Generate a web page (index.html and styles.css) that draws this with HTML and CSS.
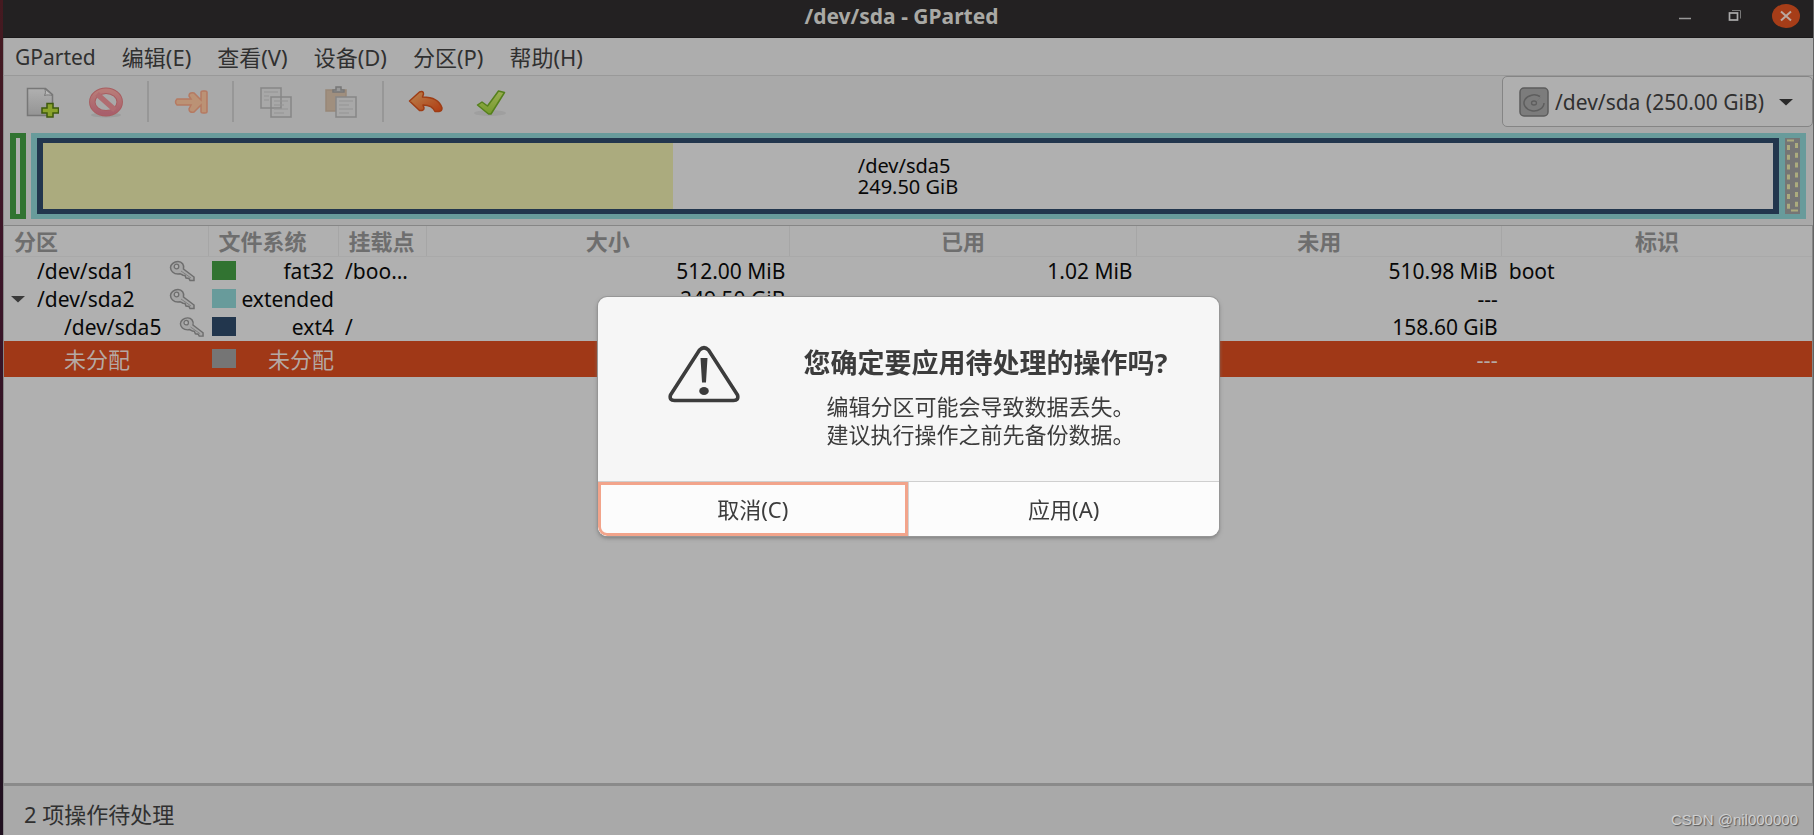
FILE: index.html
```html
<!DOCTYPE html>
<html lang="zh-CN">
<head>
<meta charset="utf-8">
<title>/dev/sda - GParted</title>
<link rel="stylesheet" href="styles.css">
</head>
<body>
<svg class="defs" aria-hidden="true">
  <defs>
    <linearGradient id="g-doc" x1="0" y1="0" x2="0" y2="1"><stop offset="0" stop-color="#b0b0b0"/><stop offset="1" stop-color="#949494"/></linearGradient>
    <linearGradient id="g-no" x1="0" y1="0" x2="0" y2="1"><stop offset="0" stop-color="#b87c78"/><stop offset="1" stop-color="#a85f6c"/></linearGradient>
    <linearGradient id="g-undo" x1="0" y1="0" x2="1" y2="1"><stop offset="0" stop-color="#b98550"/><stop offset="1" stop-color="#b03a10"/></linearGradient>
    <linearGradient id="g-ok" x1="0" y1="0" x2="0" y2="1"><stop offset="0" stop-color="#9cae55"/><stop offset="1" stop-color="#759b2c"/></linearGradient>
    <symbol id="key" viewBox="0 0 26 22">
      <path d="M9 1.500c-4 0-7.500 2.800-7.500 6s3 6.500 7.500 6.500l2-.3 3 1.500 2 .3 1 2.500 3 .5 1 2h4v-3.500L14.500 9c1-4-1.500-7.500-5.500-7.500z" fill="#a6a6a6" stroke="#6e6e6e" stroke-width="1.500"/>
      <circle cx="7.500" cy="6.500" r="2.300" fill="#b0b0b0" stroke="#6e6e6e" stroke-width="1.300"/>
      <path d="M12 11l10 7" stroke="#808080" stroke-width="1"/>
    </symbol>
  </defs>
</svg>
<div class="window">
  <header class="titlebar">
    <h1 class="titlebar-title">/dev/sda - GParted</h1>
    <div class="window-controls">
      <button class="control" aria-label="最小化"><svg width="16" height="16" viewBox="0 0 16 16"><path d="M2 10.500h12" stroke="#999" stroke-width="1.500"/></svg></button>
      <button class="control" aria-label="还原"><svg width="16" height="16" viewBox="0 0 16 16"><path d="M5 2.500h8.500v8" fill="none" stroke="#777" stroke-width="1"/><rect x="2.500" y="5" width="8" height="7" fill="none" stroke="#aaa" stroke-width="1.700"/></svg></button>
      <button class="control control-close" aria-label="关闭"><svg width="16" height="16" viewBox="0 0 16 16"><path d="M3 3.500l10 9M13 3.500l-10 9" stroke="#bba89f" stroke-width="2"/></svg></button>
    </div>
  </header>

  <nav class="menubar">
    <button class="menu">GParted</button>
    <button class="menu">编辑(E)</button>
    <button class="menu">查看(V)</button>
    <button class="menu">设备(D)</button>
    <button class="menu">分区(P)</button>
    <button class="menu">帮助(H)</button>
  </nav>

  <div class="toolbar">
    <div class="tools">
      <button class="tool" aria-label="新建"><svg width="36" height="32" viewBox="-2 0 36 32">
        <path d="M2.500 2.500h18l7 6v21h-25z" fill="url(#g-doc)" stroke="#777" stroke-width="1.500"/>
        <path d="M19.500 2.500c1.500 3 1 5 0 7 3-1 5-.5 8 0z" fill="#b8b8b8" stroke="#777" stroke-width="1"/>
        <path d="M22 17.500h6v4.500h5.500v5H28v4h-6v-4h-5v-5h5z" fill="#8aa32c" stroke="#3e5a0c" stroke-width="1.500"/></svg></button>
      <button class="tool" aria-label="删除"><svg width="36" height="32" viewBox="0 0 36 32">
        <ellipse cx="18" cy="29" rx="15" ry="2.500" fill="#9c9c9c"/>
        <ellipse cx="18" cy="16" rx="13.700" ry="11.200" fill="none" stroke="#a85d60" stroke-width="6.500"/>
        <ellipse cx="18" cy="16" rx="13.700" ry="11.200" fill="none" stroke="url(#g-no)" stroke-width="4.500"/>
        <path d="M9 8l18 16" stroke="#b06c70" stroke-width="5.500"/></svg></button>
      <span class="divider"></span>
      <button class="tool" aria-label="调整大小/移动"><svg width="36" height="32" viewBox="0 0 36 32">
        <path d="M4 13h14l-2-3q0-4 5-3l7 7V6q0-1 2-1h2q2 0 2 1v20q0 1-2 1h-2q-2 0-2-1v-7l-7 7q-5 1-5-3l2-4H4q-3-3 0-6z" fill="#bb9275" stroke="#b57a62" stroke-width="1.500"/></svg></button>
      <span class="divider"></span>
      <button class="tool" aria-label="复制"><svg width="36" height="32" viewBox="0 0 36 32">
        <g fill="#a8a8a8" stroke="#868686" stroke-width="1.500"><path d="M3 2h20v20H3zM13 11h20v20H13z"/><path d="M6 6h14M6 10h5M6 14h5M16 15h14M16 19h10M16 23h14M16 27h10" stroke="#949494" stroke-width="1"/></g></svg></button>
      <button class="tool" aria-label="粘贴"><svg width="36" height="32" viewBox="0 0 36 32">
        <path d="M3 4h20v21H3z" fill="#a08f7e" stroke="#988878" stroke-width="1.500"/>
        <path d="M10 6V4h3V1h5v3h3v2z" fill="#999" stroke="#777" stroke-width="1.500"/>
        <path d="M13 11h20v20H13z" fill="#a8a8a8" stroke="#868686" stroke-width="1.500"/><path d="M16 15h14M16 19h10M16 23h14M16 27h10" stroke="#949494" stroke-width="1"/></svg></button>
      <span class="divider"></span>
      <button class="tool" aria-label="撤消"><svg width="36" height="32" viewBox="0 0 36 32">
        <path d="M1.500 15l10-9q4-1.500 4 2l-1 3c10 0 17 3 19.500 11q0 3-3 3.500h-4c-2-5-6-6.500-12-6.500l1 3q0 3-4.500 2.500z" fill="url(#g-undo)" stroke="#9e3d15" stroke-width="1.500" stroke-linejoin="round"/></svg></button>
      <button class="tool" aria-label="应用"><svg width="36" height="32" viewBox="0 0 36 32">
        <ellipse cx="17" cy="27" rx="16" ry="3" fill="#9f9f9f"/>
        <path d="M4.500 19l4.500-3 5.500 4L25.500 5l6 1.500L18 28h-2.500z" fill="url(#g-ok)" stroke="#55801c" stroke-width="1.500" stroke-linejoin="round"/></svg></button>
    </div>
    <div class="device">
      <svg class="device-icon" width="30" height="30" viewBox="0 0 30 30"><rect x="1" y="1" width="28" height="28" rx="4" fill="#7c7c7c" stroke="#5c5c5c" stroke-width="1.500"/><path d="M21 9.500A10 8 0 1 0 25 16" fill="none" stroke="#5e5e5e" stroke-width="1.500"/><path d="M18 14l4-4" stroke="#777"/><ellipse cx="15" cy="16" rx="2.500" ry="2" fill="none" stroke="#5e5e5e" stroke-width="1.300"/></svg>
      <select class="device-select" aria-label="设备"><option>/dev/sda (250.00 GiB)</option></select>
      <svg class="device-arrow" width="16" height="8" viewBox="0 0 16 8"><path d="M1 1h14L8 7.500z" fill="#2a2a2a"/></svg>
    </div>
  </div>

  <div class="diskmap">
    <div class="part part-fat32"></div>
    <div class="part-extended">
      <div class="part-ext4">
        <div class="part-used" style="width:36.4%"></div>
        <div class="part-label"><span>/dev/sda5</span><span>249.50 GiB</span></div>
      </div>
      <div class="part-free"><svg width="15" height="75" viewBox="0 0 15 75"><path d="M2 2.500h7M6 72.500h7" stroke="#abab7e" stroke-width="2"/><path d="M3.500 7v64M11.500 5v64" stroke="#abab7e" stroke-width="3" stroke-dasharray="5 4.800"/></svg></div>
    </div>
  </div>

  <main class="listing">
    <table class="partitions">
      <colgroup><col class="c-part"><col class="c-fs"><col class="c-mount"><col class="c-size"><col class="c-used"><col class="c-free"><col></colgroup>
      <thead><tr><th class="left">分区</th><th class="left">文件系统</th><th class="left">挂载点</th><th>大小</th><th>已用</th><th>未用</th><th>标识</th></tr></thead>
      <tbody>
        <tr>
          <td><div class="name"><span class="expander"></span><span class="dev">/dev/sda1</span><svg class="key"><use href="#key"/></svg></div></td>
          <td><div class="fs"><i class="swatch fat32"></i>fat32</div></td><td>/boo…</td>
          <td class="num">512.00 MiB</td><td class="num">1.02 MiB</td><td class="num">510.98 MiB</td><td>boot</td>
        </tr>
        <tr>
          <td><div class="name"><span class="expander"><svg width="14" height="8" viewBox="0 0 14 8"><path d="M0 1h14L7 7.500z" fill="#3a3a3a"/></svg></span><span class="dev">/dev/sda2</span><svg class="key"><use href="#key"/></svg></div></td>
          <td><div class="fs"><i class="swatch extended"></i>extended</div></td><td></td>
          <td class="num">249.50 GiB</td><td></td><td class="num">---</td><td></td>
        </tr>
        <tr>
          <td><div class="name child"><span class="dev">/dev/sda5</span><svg class="key"><use href="#key"/></svg></div></td>
          <td><div class="fs"><i class="swatch ext4"></i>ext4</div></td><td>/</td>
          <td></td><td></td><td class="num">158.60 GiB</td><td></td>
        </tr>
        <tr class="selected">
          <td><div class="name child"><span class="dev">未分配</span></div></td>
          <td><div class="fs"><i class="swatch unalloc"></i>未分配</div></td><td></td>
          <td></td><td></td><td class="num">---</td><td></td>
        </tr>
      </tbody>
    </table>
  </main>

  <footer class="statusbar"><span>2 项操作待处理</span><span class="watermark">CSDN @nil000000</span></footer>
</div>

<div class="overlay">
  <section class="dialog" role="alertdialog" aria-labelledby="dlg-title">
    <div class="dialog-body">
      <svg class="warning" width="74" height="58" viewBox="0 0 74 58"><path d="M32.500 5Q37 .5 41.500 5L70.500 50Q72 55.500 66.500 55.500H7.500Q2 55.500 3.500 50z" fill="none" stroke="#3c3c3c" stroke-width="3.600" stroke-linejoin="round"/><path d="M33.500 13h7l-1.500 24.500h-4z" fill="#3c3c3c"/><ellipse cx="37" cy="46" rx="4.800" ry="4" fill="#3c3c3c"/></svg>
      <div class="message">
        <h2 class="dialog-title" id="dlg-title">您确定要应用待处理的操作吗?</h2>
        <p class="dialog-text">编辑分区可能会导致数据丢失。<br>建议执行操作之前先备份数据。</p>
      </div>
    </div>
    <div class="dialog-actions">
      <button class="action action-focus">取消(C)</button>
      <button class="action">应用(A)</button>
    </div>
  </section>
</div>
</body>
</html>
```

FILE: styles.css
```css
* { box-sizing: border-box; }

body {
  margin: 0;
  background: linear-gradient(#451a20, #3c1528 30%, #1f101f);
  color: #080808;
  font: 21px/28px "Noto Sans", "Noto Sans CJK SC", sans-serif;
}

button, select { font: inherit; color: inherit; }
button { border: 0; padding: 0; background: none; }
.defs { position: absolute; width: 0; height: 0; }

.window {
  display: flex;
  flex-direction: column;
  min-height: 100vh;
  margin-left: 3px;
  border-right: 1px solid #636363;
  background: #a9a9a9;
}

/* title bar */
.titlebar {
  display: grid;
  grid-template-columns: 1fr auto 1fr;
  height: 38px;
  padding: 0 13px 6px 0;
  align-items: center;
  background: #232122;
  border-bottom: 1px solid #1b191a;
}
.titlebar-title { grid-column: 2; margin: 0; font-size: 21px; line-height: 28px; font-weight: 700; color: #a9a9a5; }
.window-controls { display: flex; justify-content: flex-end; align-items: center; gap: 24px; }
.control { display: grid; place-items: center; width: 26px; height: 24px; }
.control-close { width: 28px; border-radius: 50%; background: #a63d18; }

/* menu bar */
.menubar {
  display: flex;
  align-items: center;
  gap: 26px;
  height: 38px;
  padding: 0 11px;
  border-left: 1px solid #8c8c8c;
  border-bottom: 1px solid #999;
  background: #adadad;
  color: #303030;
  font-size: 22px;
}
.menu:first-child { font-size: 21px; }

/* toolbar */
.toolbar { display: flex; justify-content: space-between; height: 57px; border-left: 1px solid #8c8c8c; }
.tools { display: flex; align-items: center; height: 51px; padding-left: 4px; }
.tool { display: grid; place-items: center; width: 65px; height: 40px; }
.divider { width: 2px; height: 41px; margin: 0 9px; background: #979797; }
.device { position: relative; width: 311px; height: 51px; }
.device-select {
  appearance: none;
  width: 100%;
  height: 100%;
  padding: 0 0 0 52px;
  border: 1px solid #858585;
  border-radius: 5px;
  background: #afafaf;
  color: #303030;
}
.device-icon { position: absolute; left: 17px; top: 11px; }
.device-arrow { position: absolute; right: 19px; top: 22px; }

/* disk map */
.diskmap { display: flex; gap: 5px; height: 92px; padding: 0 7px 6px 6px; border-left: 1px solid #8c8c8c; }
.part-fat32 { width: 16px; border: 5px solid #317331; border-width: 5px 6px; background: #b0b0b0; }
.part-extended { display: flex; flex: 1; gap: 6px; padding: 5px 6px; background: #689b9b; }
.part-ext4 { position: relative; display: grid; flex: 1; place-items: center; border: solid #22364d; border-width: 5px 6px; background: #b0b0b0; }
.part-used { position: absolute; left: 0; top: 0; bottom: 0; background: #abab7e; }
.part-label { display: grid; font-size: 20px; line-height: 21px; }
.part-free { width: 15px; background: #757575; overflow: hidden; }
.part-free svg { display: block; }

/* partition list */
.listing { flex: 1; border: 1px solid #868686; border-bottom: 3px solid #8a8a8a; background: #b0b0b0; }
.partitions { width: 100%; table-layout: fixed; border-collapse: collapse; }
.c-part { width: 204px; }
.c-fs { width: 130px; }
.c-mount { width: 88px; }
.c-size { width: 20.1%; }
.c-used { width: 19.2%; }
.c-free { width: 20.2%; }
.partitions th { height: 30px; padding: 0 10px; border-right: 1px solid #a6a6a6; border-bottom: 1px solid #a9a9a9; color: #6e6e6e; font-size: 22px; font-weight: 700; }
.partitions th:last-child { border-right: 0; }
.partitions th.left { text-align: left; }
.partitions td { height: 28px; padding: 0 4px 0 7px; white-space: nowrap; }
.partitions .num { text-align: right; }
.name { display: flex; align-items: center; gap: 26px; }
.name.child { padding-left: 53px; gap: 13px; }
.expander { display: flex; width: 26px; margin-right: -26px; }
.dev { width: 106px; }
.key { width: 26px; height: 22px; }
.fs { display: flex; align-items: center; justify-content: space-between; margin-left: -3px; }
.swatch { width: 24px; height: 19px; }
.fat32 { background: #317331; }
.extended { background: #689b9b; }
.ext4 { background: #22364d; }
.unalloc { background: #757575; }
.selected td { height: 36px; background: #a03817; color: #b5a9a4; font-size: 22px; }

/* status bar */
.statusbar { display: flex; align-items: center; justify-content: space-between; height: 49px; padding: 6px 15px 0 20px; color: #303030; font-size: 22px; border-left: 1px solid #8c8c8c; }
.watermark { padding-top: 12px; font: 15px/20px "Liberation Sans", sans-serif; color: #d0d0d0; text-shadow: 1px 1px 1px #555; }

/* confirmation dialog */
.overlay { position: fixed; inset: 0; display: grid; place-items: center; padding: 0 0 3px 2px; }
.dialog { width: 621px; border-radius: 9px; overflow: hidden; background: #f6f6f6; color: #3c3c3c; box-shadow: 0 0 0 1px #969696, 0 2px 4px #777; }
.dialog-body { display: flex; gap: 63px; padding: 48px 0 33px 69px; }
.dialog-title { margin: 0 0 11px; font-size: 27px; line-height: 36px; font-weight: 700; white-space: nowrap; }
.dialog-text { margin: 0; padding-left: 23px; font-size: 22px; line-height: 28px; white-space: nowrap; }
.dialog-actions { display: grid; grid-template-columns: 1fr 1fr; border-top: 1px solid #cfcfcf; background: #fcfcfc; }
.action { height: 54px; font-size: 22px; border-left: 1px solid #d4d4d4; }
.action-focus { border: 3px solid #f2a48b; border-bottom-left-radius: 9px; }
```
